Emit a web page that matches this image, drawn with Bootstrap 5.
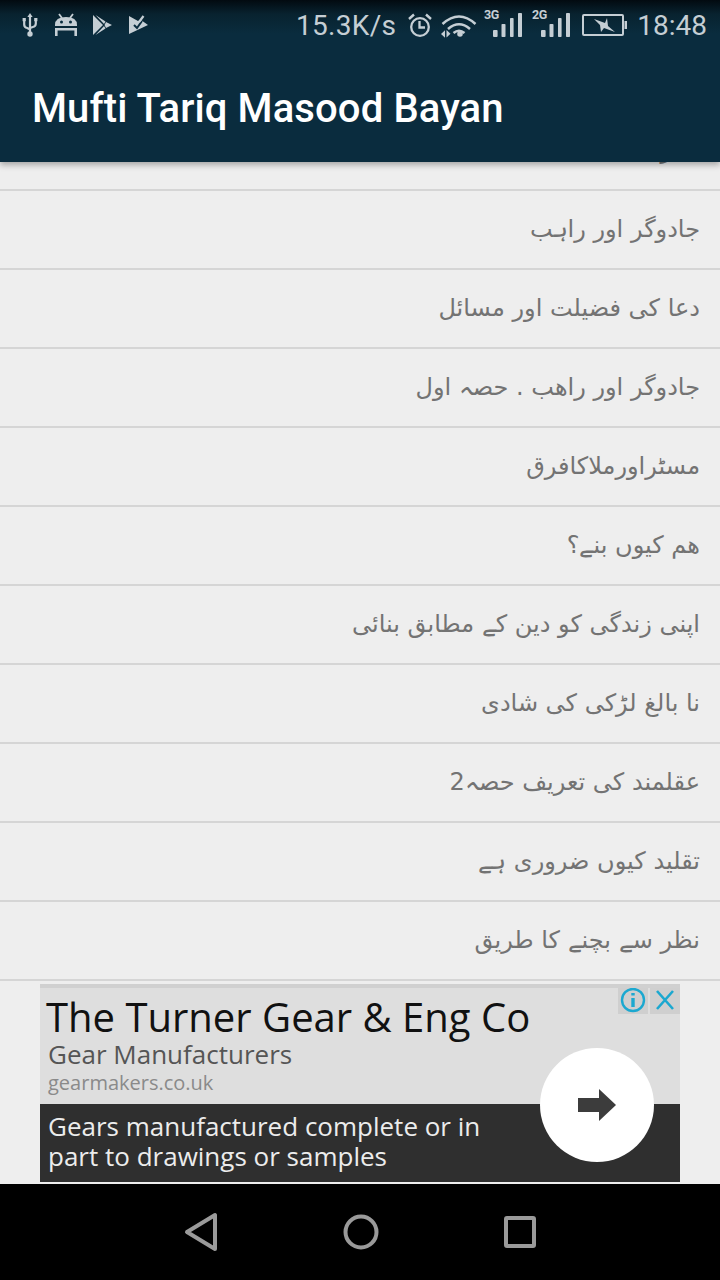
<!DOCTYPE html>
<html lang="ur">
<head>
<meta charset="utf-8">
<title>Mufti Tariq Masood Bayan</title>
<link href="https://cdn.jsdelivr.net/npm/bootstrap@5.3.0/dist/css/bootstrap.min.css" rel="stylesheet">
<style>
html,body{height:100%;margin:0}
body{width:720px;height:1280px;overflow:hidden;background:#eeeeee;font-family:Roboto,sans-serif}
.app-shell{height:1280px}
.top-bar{height:162px;background:linear-gradient(#020a10 0,#08222f 14px,#0a2c3e 34px,#0a2c3e 100%);box-shadow:0 3px 6px rgba(0,0,0,.3);z-index:2;position:relative}
.status-row{height:50px;padding:0 13px 0 22px;color:#c5ced4}
.status-row svg{flex:0 0 auto;display:block;overflow:visible}
.status-txt{font-size:28px;font-family:Roboto,sans-serif;line-height:1;padding-top:2px}
.speed-txt{letter-spacing:.3px}
.m-android{margin-left:16px}
.m-play{margin-left:15px}
.m-check{margin-left:17px}
.m-alarm{margin-left:12px}
.m-wifi{margin-left:9px}
.m-sig1{margin-left:7px}
.m-sig2{margin-left:10px}
.m-batt{margin-left:12px}
.m-time{margin-left:10px}
.app-title{font-family:Roboto,sans-serif;font-weight:500;font-size:40px;line-height:1;letter-spacing:.12px;color:#fff;padding:39px 0 0 32px;margin:0}
.list-zone{flex:1 1 0;min-height:0;overflow:hidden;justify-content:flex-end;background:#eee}
.urdu-row{flex:0 0 79px;height:79px;border-bottom:2px solid #d5d5d5;color:#737373;font-family:"DejaVu Sans",sans-serif;font-size:24px;line-height:77px;padding-right:20px;text-align:right;direction:rtl;white-space:nowrap}
.ad-slot{height:203px;padding:3px 40px 2px;background:#eee}
.ad-box{height:198px;position:relative;overflow:hidden;background:#dedede;border-top:4px solid #d0d0d0;font-family:"Open Sans",sans-serif}
.ad-upper{height:116px;padding:9px 0 0 8px}
.ad-head{font-size:40px;line-height:1;color:#111;margin-left:-2px;white-space:nowrap}
.ad-sub{font-size:26px;line-height:1;color:#555;margin-top:4px}
.ad-url{font-size:20px;line-height:1;color:#8a8a8a;margin-top:6px}
.ad-lower{height:78px;background:#2f2f2f;color:#ececec;font-size:26px;line-height:30px;padding:7px 8px 0}
.ad-circle{position:absolute;width:114px;height:114px;border-radius:50%;background:#fff;right:26px;top:60px}
.ad-marks{position:absolute;right:0;top:-2px;gap:2px}
.ad-mark{width:30px;height:28px;background:#cfcfcf}
.nav-zone{height:96px;background:#000;gap:125px}
</style>
</head>
<body>
<div class="app-shell d-flex flex-column">
  <header class="top-bar flex-shrink-0">
    <div class="status-row d-flex align-items-center">
      <svg width="16" height="24" viewBox="0 0 16 24" fill="none" stroke="#c5ced4" stroke-width="2.2"><path d="M8 3v18M2.2 7v4.5q0 3 3 3.5L8 16.5M13.8 7v3.5q0 3-3 3.5L8 15"/><path d="M8 0l2.6 4H5.4z" fill="#c5ced4" stroke="none"/><circle cx="8" cy="21" r="2.7" fill="#c5ced4" stroke="none"/><rect x=".6" y="5" width="3.2" height="3.2" fill="#c5ced4" stroke="none"/><rect x="12.2" y="5" width="3.2" height="3.2" fill="#c5ced4" stroke="none"/></svg>
      <svg class="m-android" width="24" height="22" viewBox="0 0 24 22"><path fill="#c5ced4" d="M1 11q0-8 11-8t11 8v1H1z"/><circle cx="7.5" cy="8" r="1.5" fill="#0a2c3e"/><circle cx="16.5" cy="8" r="1.5" fill="#0a2c3e"/><path fill="none" stroke="#c5ced4" stroke-width="1.8" d="M5 0l3 4M19 0l-3 4"/><path fill="none" stroke="#c5ced4" stroke-width="2.6" d="M2.3 22v-6.7h19.4V22"/></svg>
      <svg class="m-play" width="19" height="20" viewBox="0 0 19 20"><path fill="#c5ced4" d="M0 0v20l10-10z"/><path fill="#c5ced4" d="M2.5 0l10 6.5-1.5 2.5zM2.5 20l10-6.500-1.500-2.500zM13 7l6 3-6 3-1.500-3z"/></svg>
      <svg class="m-check" width="19" height="18" viewBox="0 0 19 18"><path fill="#c5ced4" d="M0 0l9 5 3-1 7 5-19 9z"/><path fill="none" stroke="#0a2c3e" stroke-width="2" d="M5 9l3 3 5-7"/><path fill="none" stroke="#c5ced4" stroke-width="2.2" d="M10 6l4.5-6"/></svg>
      <span class="status-txt speed-txt ms-auto">15.3K/s</span>
      <svg class="m-alarm" width="24" height="24" viewBox="0 0 24 24" fill="none" stroke="#c5ced4" stroke-width="2.3"><circle cx="12" cy="14" r="8.8"/><path d="M11.5 8v6.5h5.5"/><path d="M1 6l5-4.500M23 6l-5-4.500" stroke-width="2.4"/></svg>
      <svg class="m-wifi" width="36" height="24" viewBox="0 0 36 24" fill="none" stroke="#c5ced4" stroke-width="2.5"><path d="M1.500 11q16.500-15 33 0M7 16q11-9.500 22 0M12.500 20q5.500-4.500 11 0"/><circle cx="19" cy="21" r="2.8" fill="#c5ced4" stroke="none"/><path fill="#c5ced4" stroke="none" d="M0 21l4-3.800v7.600zM5.500 17l4 3.800-4 3.800z"/></svg>
      <svg class="m-sig1" width="38" height="32" viewBox="0 0 38 32" fill="#c5ced4"><text x="0" y="9.5" font-family="Roboto,sans-serif" font-weight="700" font-size="12.5" letter-spacing="-.3">3G</text><rect x="9" y="21" width="4.6" height="7" rx="1"/><rect x="17.5" y="15" width="4" height="13" rx=".8"/><rect x="26" y="9" width="3.6" height="19" rx=".8"/><rect x="34" y="4" width="4" height="24" rx=".8"/></svg>
      <svg class="m-sig2" width="38" height="32" viewBox="0 0 38 32" fill="#c5ced4"><text x="0" y="9.5" font-family="Roboto,sans-serif" font-weight="700" font-size="12.5" letter-spacing="-.3">2G</text><rect x="9" y="21" width="4.6" height="7" rx="1"/><rect x="17.5" y="15" width="4" height="13" rx=".8"/><rect x="26" y="9" width="3.6" height="19" rx=".8"/><rect x="34" y="4" width="4" height="24" rx=".8"/></svg>
      <svg class="m-batt" width="45" height="22" viewBox="0 0 45 22"><rect x="1" y="1" width="40" height="20" rx="1" fill="none" stroke="#c5ced4" stroke-width="2"/><rect x="42.5" y="7" width="2.5" height="8" fill="#c5ced4"/><path fill="#c5ced4" d="M12 5l11 4 2-5 1 8 7 6-11-4-3 4-1-7z"/></svg>
      <span class="status-txt m-time">18:48</span>
    </div>
    <h1 class="app-title">Mufti Tariq Masood Bayan</h1>
  </header>
  <main class="list-zone d-flex flex-column">
    <div class="urdu-row">نماز کی جگہ</div>
    <div class="urdu-row">جادوگر اور راہب</div>
    <div class="urdu-row">دعا کی فضیلت اور مسائل</div>
    <div class="urdu-row">جادوگر اور راھب . حصہ اول</div>
    <div class="urdu-row">مسٹراورملاکافرق</div>
    <div class="urdu-row">هم کیوں بنے؟</div>
    <div class="urdu-row">اپنی زندگی کو دین کے مطابق بنائی</div>
    <div class="urdu-row">نا بالغ لڑکی کی شادی</div>
    <div class="urdu-row">عقلمند کی تعریف حصہ2</div>
    <div class="urdu-row">تقلید کیوں ضروری ہے</div>
    <div class="urdu-row">نظر سے بچنے کا طریق</div>
  </main>
  <aside class="ad-slot flex-shrink-0">
    <div class="ad-box">
      <div class="ad-upper">
        <div class="ad-head">The Turner Gear &amp; Eng Co</div>
        <div class="ad-sub">Gear Manufacturers</div>
        <div class="ad-url">gearmakers.co.uk</div>
      </div>
      <div class="ad-lower">Gears manufactured complete or in<br>part to drawings or samples</div>
      <div class="ad-circle d-flex align-items-center justify-content-center">
        <svg width="38" height="32" viewBox="0 0 38 32" fill="#3c3c3c"><path d="M0 9h21V0l17 16-17 16v-9H0z"/></svg>
      </div>
      <div class="ad-marks d-flex">
        <div class="ad-mark d-flex align-items-center justify-content-center"><svg width="26" height="26" viewBox="0 0 26 26" fill="none" stroke="#1ba8d0" stroke-width="2.4"><circle cx="13" cy="13" r="11"/><path d="M13 11v9M13 6v2.6" stroke-width="3.4"/></svg></div>
        <div class="ad-mark d-flex align-items-center justify-content-center"><svg width="22" height="22" viewBox="0 0 22 22" fill="none" stroke="#1ba8d0" stroke-width="2.6"><path d="M3 2l16 18M19 2L3 20"/></svg></div>
      </div>
    </div>
  </aside>
  <nav class="nav-zone flex-shrink-0 d-flex align-items-center justify-content-center">
    <svg width="34" height="40" viewBox="0 0 34 40" fill="none" stroke="#9a9a9a" stroke-width="4" stroke-linejoin="round"><path d="M31 3v34L3 20z"/></svg>
    <svg width="36" height="36" viewBox="0 0 36 36" fill="none" stroke="#9a9a9a" stroke-width="4"><circle cx="18" cy="18" r="15.5"/></svg>
    <svg width="32" height="32" viewBox="0 0 32 32" fill="none" stroke="#9a9a9a" stroke-width="4"><rect x="2" y="2" width="28" height="28" rx="1"/></svg>
  </nav>
</div>
<script src="https://cdn.jsdelivr.net/npm/bootstrap@5.3.0/dist/js/bootstrap.bundle.min.js"></script>
</body>
</html>
